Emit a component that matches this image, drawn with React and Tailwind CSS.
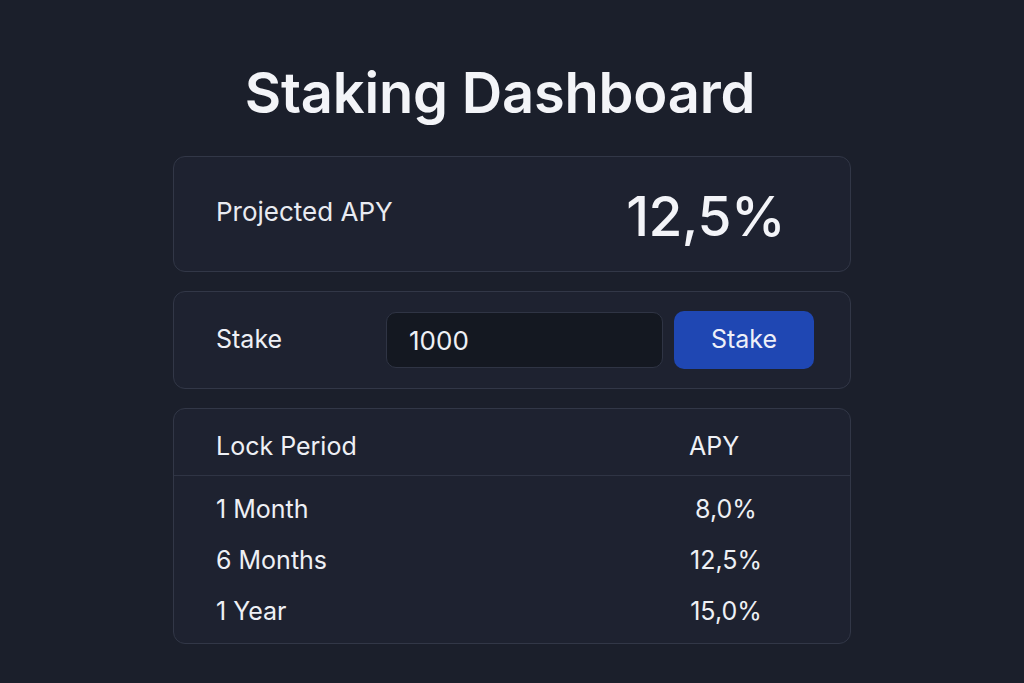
const periods = [
  { label: '1 Month', apy: '8,0%' },
  { label: '6 Months', apy: '12,5%' },
  { label: '1 Year', apy: '15,0%' },
];

export default function App() {
  return (
    <div
      className="min-h-[683px] w-full bg-[#1b1f2b] text-[#f3f4f8] flex flex-col items-center"
      style={{ fontFamily: 'Inter, "Noto Sans", sans-serif' }}
    >
      <h1 className="mt-[58px] mr-[24px] text-[56px] font-semibold leading-[70px] tracking-[-0.2px]">
        Staking Dashboard
      </h1>

      <div className="mt-[28px] w-[678px] flex flex-col gap-[19px]">
        {/* Projected APY */}
        <div className="h-[116px] rounded-[12px] border border-[#323747] bg-[#1e2230] flex items-center pl-[42px] pr-[65px]">
          <span className="text-[26px] text-[#e9ebf1] -mt-[5px]">Projected APY</span>
          <span className="ml-auto text-[55px] font-medium tracking-[-0.5px] mt-[4px]">12,5%</span>
        </div>

        {/* Stake input */}
        <div className="h-[98px] rounded-[12px] border border-[#323747] bg-[#1e2230] flex items-center pl-[42px] pr-[36px]">
          <span className="w-[170px] text-[25px] text-[#eef0f5]">Stake</span>
          <div className="w-[277px] h-[56px] rounded-[10px] border border-[#2f3444] bg-[#141821] flex items-center px-[22px]">
            <span className="text-[26px] text-[#eef0f5]">1000</span>
          </div>
          <button className="ml-[11px] w-[140px] h-[58px] rounded-[10px] bg-[#1f47b3] text-[25px] text-[#eef0f8]">
            Stake
          </button>
        </div>

        {/* Lock periods */}
        <div className="h-[236px] rounded-[12px] border border-[#323747] bg-[#1e2230] flex flex-col">
          <div className="h-[67px] border-b border-[#2f3444] flex items-center pl-[42px] pt-[10px]">
            <span className="w-[473px] text-[25px] text-[#eef0f5]">Lock Period</span>
            <span className="text-[25px] text-[#eef0f5]">APY</span>
          </div>
          <div className="flex flex-col pt-[8px]">
            {periods.map((p) => (
              <div key={p.label} className="h-[51px] flex items-center pl-[42px]">
                <span className="w-[473px] text-[25px] text-[#eef0f5]">{p.label}</span>
                <span className="w-[74px] text-center text-[25px] text-[#eef0f5]">{p.apy}</span>
              </div>
            ))}
          </div>
        </div>
      </div>
    </div>
  );
}
